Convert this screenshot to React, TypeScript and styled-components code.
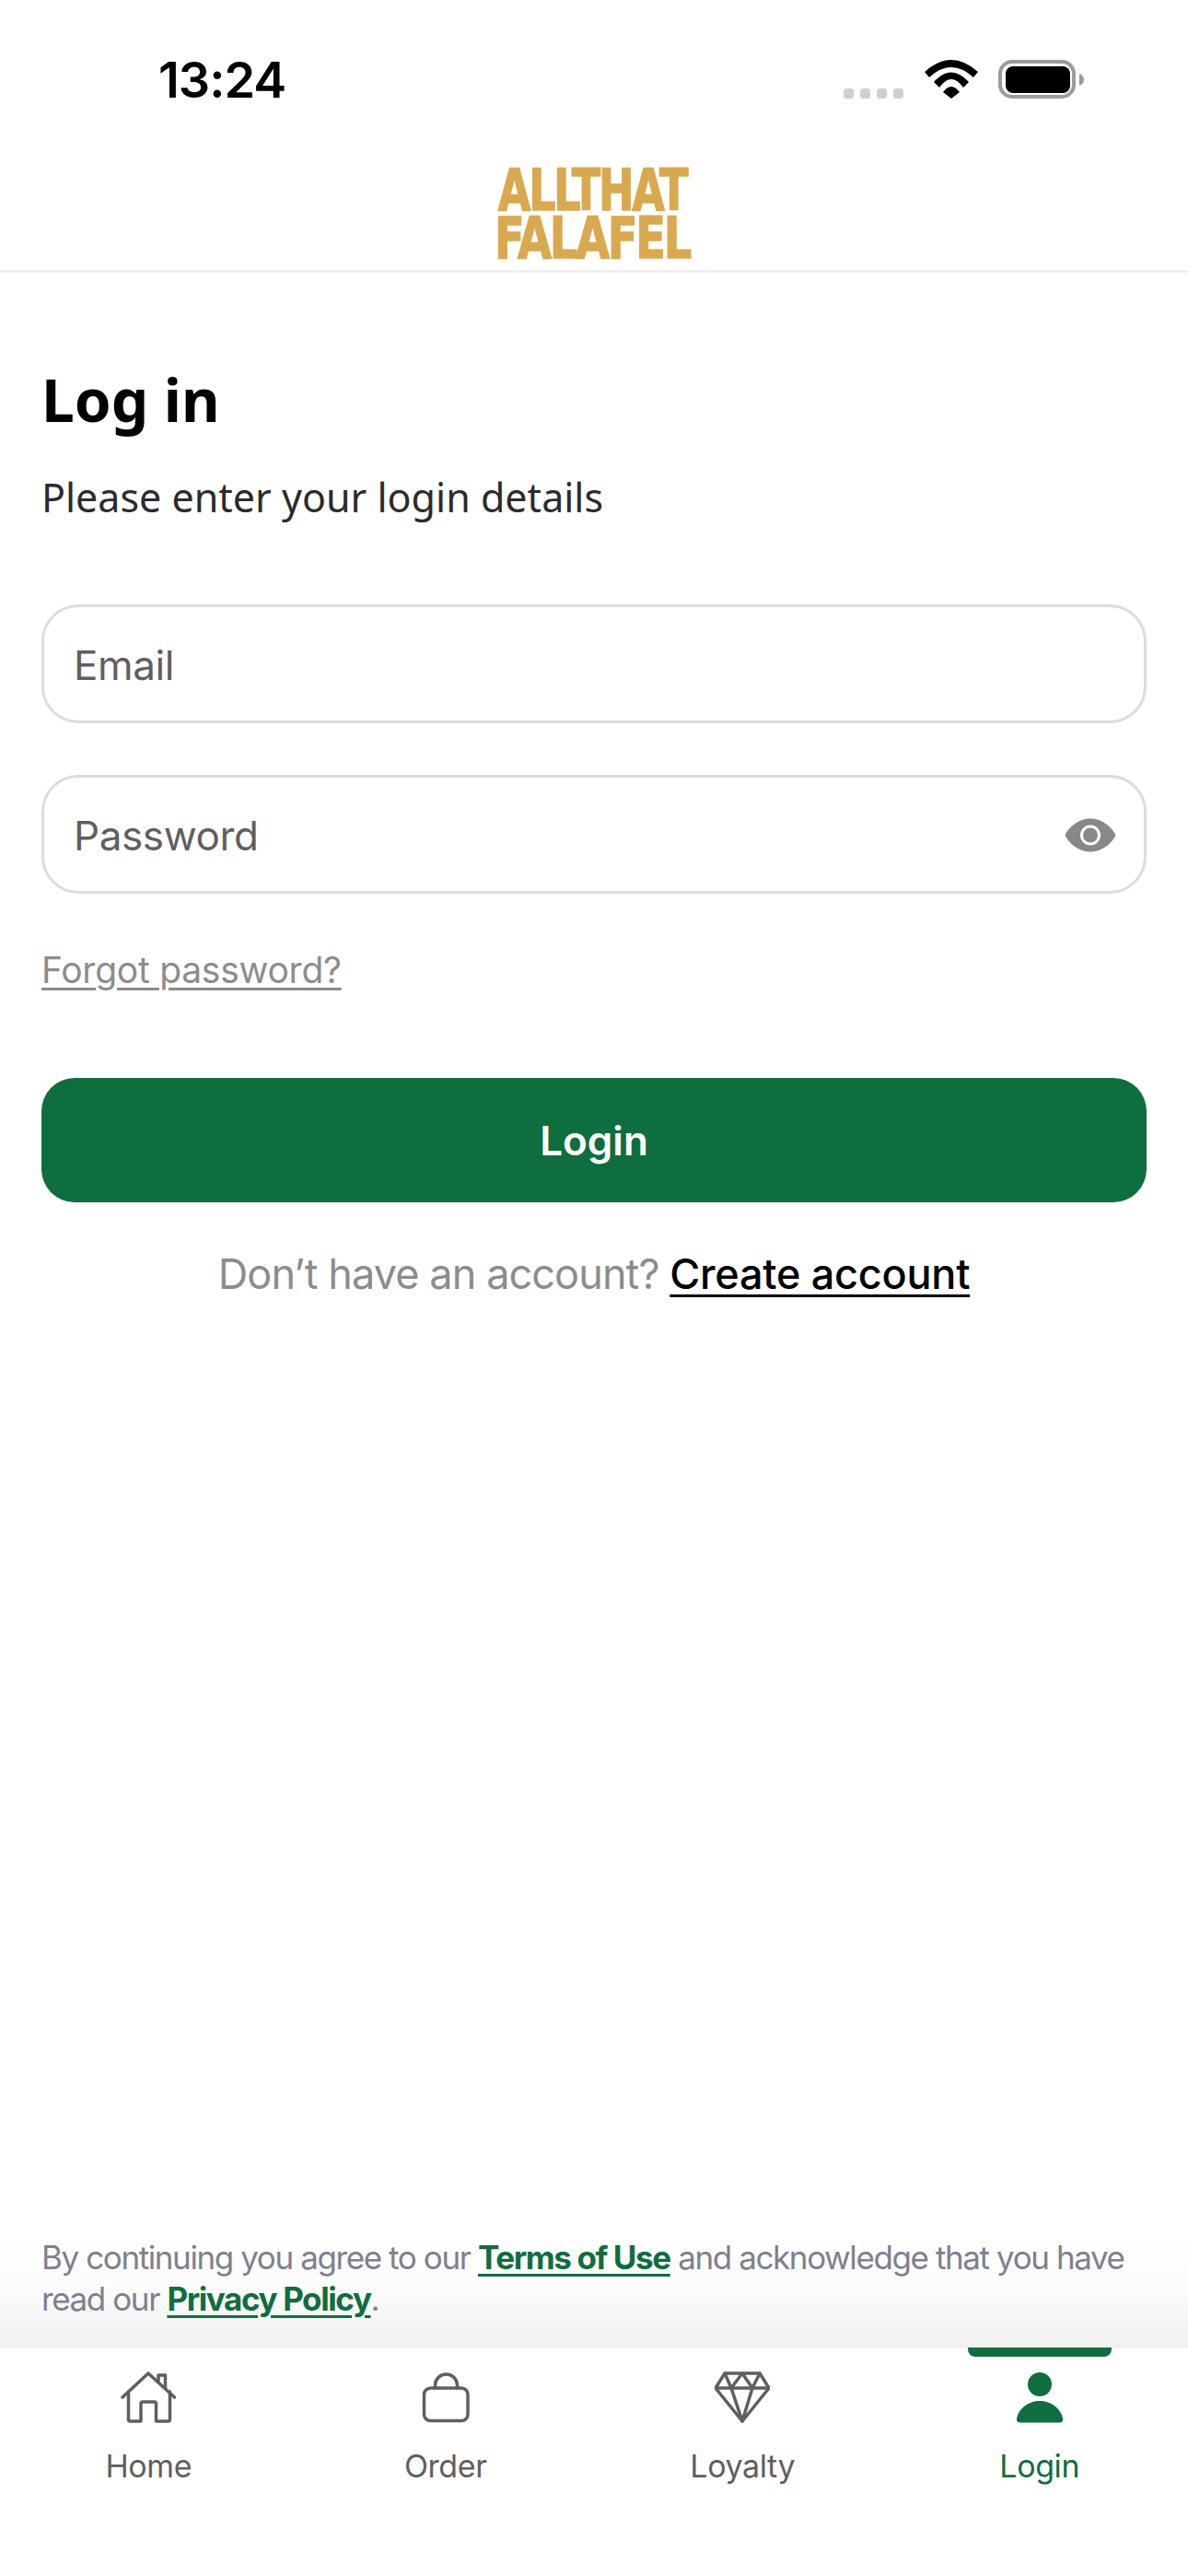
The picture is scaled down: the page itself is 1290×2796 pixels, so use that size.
import React from 'react';
import styled, { createGlobalStyle } from 'styled-components';

const GREEN = '#0f6e3d';
const GREY = '#5f5f5f';

const Global = createGlobalStyle`
  html, body { margin: 0; padding: 0; background: #fff; }
  * { box-sizing: border-box; }
  body { font-family: Inter, "Liberation Sans", sans-serif; }
`;

const Page = styled.div`
  width: 1290px;
  height: 2796px;
  display: flex;
  flex-direction: column;
  background: #fff;
`;

const StatusBar = styled.div`
  height: 172px;
  padding: 59px 112px 0 172px;
  display: flex;
  justify-content: space-between;
  align-items: flex-start;
`;

const Time = styled.div`
  font-family: Inter, sans-serif;
  font-weight: 600;
  font-size: 54px;
  line-height: 56px;
  letter-spacing: -1px;
  color: #000;
`;

const StatusIcons = styled.svg`
  width: 262px;
  height: 60px;
  margin-top: 1px;
`;

const Header = styled.header`
  height: 124px;
  padding-right: 5px;
  display: flex;
  align-items: flex-start;
  justify-content: center;
  border-bottom: 3px solid #f0f0f0;
`;

const Logo = styled.div`
  width: 212px;
  margin-top: 9px;
  font-family: "DejaVu Sans", sans-serif;
  font-weight: 700;
  color: #d9a94f;
`;

const LogoLine = styled.div<{ $scale: number }>`
  height: 52px;
  font-size: 63px;
  line-height: 52px;
  white-space: nowrap;
  letter-spacing: -3px;
  -webkit-text-stroke: 1.5px #d9a94f;
  transform: scaleX(${p => p.$scale});
  transform-origin: center;
  display: flex;
  justify-content: center;
`;

const Main = styled.main`
  flex: 1;
  padding: 0 45px;
  display: flex;
  flex-direction: column;
`;

const Title = styled.h1`
  margin: 100px 0 0;
  font-family: "Noto Sans", sans-serif;
  font-weight: 700;
  font-size: 64px;
  line-height: 76px;
  color: #000;
`;

const Subtitle = styled.p`
  margin: 42px 0 0;
  font-family: "Noto Sans", sans-serif;
  font-weight: 400;
  font-size: 43px;
  line-height: 52px;
  color: #2b2b2b;
`;

const Field = styled.div<{ $top: number }>`
  margin-top: ${p => p.$top}px;
  height: 129px;
  border: 3px solid #dcdcdc;
  border-radius: 40px;
  padding: 2px 30px 0 32px;
  display: flex;
  align-items: center;
  justify-content: space-between;
`;

const FieldLabel = styled.span`
  font-size: 44px;
  letter-spacing: -0.4px;
  color: #5f5f5f;
`;

const EyeIcon = styled.svg`
  width: 56px;
  height: 37px;
`;

const Forgot = styled.a`
  margin-top: 59px;
  align-self: flex-start;
  font-size: 39px;
  line-height: 48px;
  letter-spacing: -0.25px;
  color: #8c8c8c;
  text-decoration: underline;
  text-underline-offset: 5px;
  text-decoration-thickness: 3px;
`;

const LoginButton = styled.button`
  margin-top: 93px;
  height: 135px;
  border: 0;
  border-radius: 36px;
  background: ${GREEN};
  color: #fff;
  font-family: Inter, sans-serif;
  font-weight: 600;
  font-size: 44px;
`;

const SignUp = styled.div`
  margin-top: 50px;
  text-align: center;
  font-size: 45px;
  line-height: 56px;
  color: #8c8c8c;
  letter-spacing: -0.9px;
`;

const SignUpLink = styled.a`
  color: #000;
  font-weight: 500;
  letter-spacing: -0.25px;
  text-decoration: underline;
  text-underline-offset: 6px;
  text-decoration-thickness: 3px;
`;

const Legal = styled.div`
  height: 130px;
  padding: 10px 45px 0;
  background: linear-gradient(to bottom, #fff 0%, #fcfcfc 50%, #f0f0f0 100%);
  font-size: 35px;
  line-height: 45px;
  letter-spacing: -1.4px;
  color: #7f7f90;
`;

const LegalLink = styled.a`
  color: ${GREEN};
  font-weight: 700;
  text-decoration: underline;
  text-underline-offset: 5px;
  text-decoration-thickness: 3px;
`;

const TabBar = styled.nav`
  height: 248px;
  display: grid;
  grid-template-columns: repeat(4, 1fr);
  background: #fff;
`;

const Tab = styled.div<{ $active?: boolean }>`
  position: relative;
  display: flex;
  flex-direction: column;
  align-items: center;
  padding-top: 24px;
  color: ${p => (p.$active ? GREEN : GREY)};
  &::before {
    content: ${p => (p.$active ? '""' : 'none')};
    position: absolute;
    top: 0;
    left: 50%;
    width: 156px;
    height: 10px;
    margin-left: -78px;
    background: ${GREEN};
    border-radius: 0 0 8px 8px;
  }
`;

const TabIcon = styled.svg<{ $solid?: boolean }>`
  width: 60px;
  height: 60px;
  fill: ${p => (p.$solid ? 'currentColor' : 'none')};
  stroke: ${p => (p.$solid ? 'none' : 'currentColor')};
  stroke-width: 3.5;
  stroke-linecap: round;
  stroke-linejoin: round;
`;

const TabLabel = styled.span`
  margin-top: 23px;
  font-size: 34px;
  line-height: 44px;
  letter-spacing: -0.4px;
`;

const HomeGlyph = () => (
  <TabIcon viewBox="0 0 60 60">
    <path d="M2 30 L30 4 L58.5 30" />
    <path d="M8.5 24 V54 a2 2 0 0 0 2 2 H22 V37 a2 2 0 0 1 2-2 h12.5 a2 2 0 0 1 2 2 V56 H51.5 a2 2 0 0 0 2-2 V24" />
    <path d="M41 12 V6 h7.5 V20" />
  </TabIcon>
);

const BagGlyph = () => (
  <TabIcon viewBox="0 0 60 60">
    <rect x="6.5" y="20" width="47.5" height="35.5" rx="7" />
    <path d="M18.5 20 v-3 a12 12 0 0 1 24 0 v3" />
  </TabIcon>
);

const DiamondGlyph = () => (
  <TabIcon viewBox="0 0 60 60">
    <path d="M11 4 H49 L59 20 L30 56 L1 20 Z" />
    <path d="M1 20 H59" />
    <path d="M11 4 L18 20 L30 4 L41 20 L49 4" />
    <path d="M18 20 L30 56 L41 20" />
  </TabIcon>
);

const PersonGlyph = () => (
  <TabIcon viewBox="0 0 60 60" $solid>
    <circle cx="30" cy="16" r="13" />
    <path d="M5 53 C7 42 18 34 30 34 C42 34 53 42 55 53 C55.5 56 54 57.5 51 57.5 H9 C6 57.5 4.5 56 5 53 Z" />
  </TabIcon>
);

export default function App() {
  return (
    <Page>
      <Global />
      <StatusBar>
        <Time>13:24</Time>
        <StatusIcons viewBox="0 0 262 60">
          <rect x="0" y="36" width="11" height="11" rx="3.5" fill="#cfcfcf" />
          <rect x="18" y="36" width="11" height="11" rx="3.5" fill="#cfcfcf" />
          <rect x="36" y="36" width="11" height="11" rx="3.5" fill="#cfcfcf" />
          <rect x="54" y="36" width="11" height="11" rx="3.5" fill="#cfcfcf" />
          <path d="M88 18 Q117 -8 146 18 L141 24 Q117 2 93 24 Z" fill="#000" />
          <path d="M98 29 Q117 8 136 29 L130 35 Q117 17 104 35 Z" fill="#000" />
          <path d="M108 40 Q117 28 126 40 L117 47 Z" fill="#000" />
          <rect x="170" y="7" width="80" height="38" rx="13" fill="none" stroke="#9b9b9b" strokeWidth="4" />
          <rect x="176" y="12" width="70" height="29" rx="8" fill="#000" />
          <path d="M256 20 C259 21 261 23 261 26.5 C261 30 259 32 256 33 Z" fill="#9b9b9b" />
        </StatusIcons>
      </StatusBar>
      <Header>
        <Logo>
          <LogoLine $scale={0.73}>ALLTHAT</LogoLine>
          <LogoLine $scale={0.76}>FALAFEL</LogoLine>
        </Logo>
      </Header>
      <Main>
        <Title>Log in</Title>
        <Subtitle>Please enter your login details</Subtitle>
        <Field $top={90}>
          <FieldLabel>Email</FieldLabel>
        </Field>
        <Field $top={56}>
          <FieldLabel>Password</FieldLabel>
          <EyeIcon viewBox="0 0 56 37">
            <path fillRule="evenodd" fill="#888" d="M28 0.5 C42 0.5 52 11 55.5 18.5 C52 26 42 36.5 28 36.5 C14 36.5 4 26 0.5 18.5 C4 11 14 0.5 28 0.5 Z M28 7.5 a11 11 0 1 0 0 22 a11 11 0 1 0 0-22 Z M28 10.5 a8 8 0 1 1 0 16 a8 8 0 1 1 0-16 Z" />
          </EyeIcon>
        </Field>
        <Forgot>Forgot password?</Forgot>
        <LoginButton>Login</LoginButton>
        <SignUp>
          Don’t have an account? <SignUpLink>Create account</SignUpLink>
        </SignUp>
      </Main>
      <Legal>
        By continuing you agree to our <LegalLink>Terms of Use</LegalLink> and acknowledge that you have read our <LegalLink>Privacy Policy</LegalLink>.
      </Legal>
      <TabBar>
        <Tab><HomeGlyph /><TabLabel>Home</TabLabel></Tab>
        <Tab><BagGlyph /><TabLabel>Order</TabLabel></Tab>
        <Tab><DiamondGlyph /><TabLabel>Loyalty</TabLabel></Tab>
        <Tab $active><PersonGlyph /><TabLabel>Login</TabLabel></Tab>
      </TabBar>
    </Page>
  );
}
